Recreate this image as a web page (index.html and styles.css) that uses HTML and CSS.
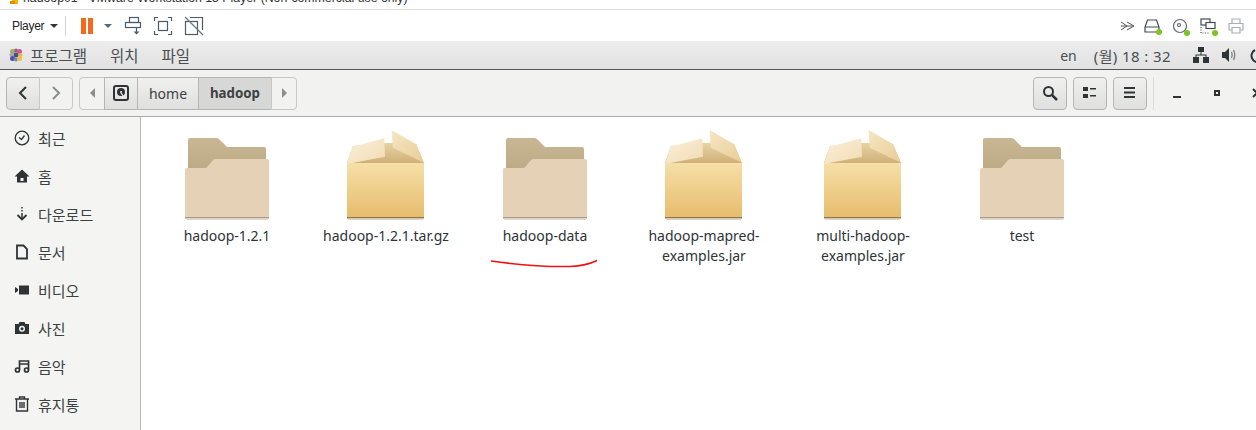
FILE: index.html
```html
<!DOCTYPE html>
<html lang="en">
<head>
    <meta charset="UTF-8">
    <title>hadoop01 - VMware Workstation 15 Player</title>
    <link rel="stylesheet" href="styles.css">
</head>
<body>
    <svg width="0" height="0" class="defs">
        <defs>
            <linearGradient id="boxfront" x1="0" y1="0" x2="0" y2="1"><stop offset="0" stop-color="#f6dfa8"/><stop offset="1" stop-color="#e7bc6c"/></linearGradient>
            <linearGradient id="flapleft" x1="0" y1="0" x2="1" y2="1"><stop offset="0" stop-color="#fbf0da"/><stop offset="1" stop-color="#f1dcb3"/></linearGradient>
            <linearGradient id="flapright" x1="0" y1="0" x2="1" y2="1"><stop offset="0" stop-color="#f6e6c4"/><stop offset="1" stop-color="#e9cd95"/></linearGradient>
            <linearGradient id="boxin" x1="0" y1="0" x2="0" y2="1"><stop offset="0" stop-color="#e8d3a4"/><stop offset="1" stop-color="#cfb077"/></linearGradient>
            <linearGradient id="folderback" x1="0" y1="0" x2="0" y2="1"><stop offset="0" stop-color="#c9b794"/><stop offset="1" stop-color="#b9a683"/></linearGradient>
            <symbol id="folder" viewBox="0 0 90 90">
                <path d="M6 10q0-2 2-2h26q2 0 3 1l8 8h37q2 0 2 2v30H6z" fill="url(#folderback)"/>
                <path d="M3 40q0-2 2-2h18q2 0 3-2l5-6q1-1 3-1h51q2 0 2 2v55q0 2-2 2H5q-2 0-2-2z" fill="#e4d1b6"/>
                <rect x="3" y="87" width="84" height="1.500" fill="#a99b85"/>
                <rect x="4" y="88.500" width="82" height="1.500" fill="#ddd9d2"/>
            </symbol>
            <symbol id="box" viewBox="0 0 90 90">
                <path d="M12 16L44 13h8L75 14 83 33H6z" fill="url(#boxin)"/>
                <rect x="6" y="33" width="77" height="55" fill="url(#boxfront)"/>
                <path d="M6 34L11.700 16.700 43.300 8.300 44 26.700z" fill="url(#flapleft)"/>
                <path d="M50.700 0L75 14.300 82.500 32.500 51.700 17.700z" fill="url(#flapright)"/>
                <rect x="6" y="87" width="77" height="1.500" fill="#8f7748"/>
                <rect x="7" y="88.500" width="75" height="1.500" fill="#d8d4cc"/>
            </symbol>
        </defs>
    </svg>

    <div class="titlebar">
        <svg class="title-icon" width="8" height="5" viewBox="0 0 8 5"><rect x="2" y="0" width="6" height="4" fill="#f5b400"/><rect x="0" y="1" width="5" height="3" fill="#e88a00"/></svg>
        <span class="title-text">hadoop01 - VMware Workstation 15 Player (Non-commercial use only)</span>
    </div>

    <div class="player-bar">
        <div class="player-left">
            <span class="player-menu">Player</span>
            <span class="caret"></span>
            <span class="vsep"></span>
            <span class="pause"><i></i><i></i></span>
            <span class="caret caret-gray"></span>
            <svg class="shift" width="20" height="20" viewBox="0 0 20 20" fill="none" stroke="#4c5b68" stroke-width="1.2"><rect x="5.5" y="1.5" width="9" height="5"/><rect x="1.5" y="6.5" width="15" height="5"/><path d="M12.5 12v4"/><path d="M9.5 15.5h6l-3 3z" fill="#4c5b68" stroke="none"/></svg>
            <svg width="20" height="20" viewBox="0 0 20 20" fill="none" stroke="#4c5b68" stroke-width="1.2"><path d="M1.5 5V1.500H5M15 1.500h3.500V5M18.500 15v3.500H15M5 18.500H1.500V15"/><rect x="5.500" y="5.500" width="9" height="9"/></svg>
            <svg width="20" height="20" viewBox="0 0 20 20" fill="none" stroke="#4c5b68" stroke-width="1.200"><rect x="1.500" y="5.500" width="12" height="13"/><path d="M6 1.500h12.500V14"/><path d="M1 1l18 18" stroke="#6b7680"/></svg>
        </div>
        <div class="player-right">
            <span class="device chevrons"><svg width="15" height="12" viewBox="0 0 15 12" fill="none" stroke="#555" stroke-width="1"><path d="M1 2l6 4-6 4M7 2l7 4-7 4M1 6h12"/></svg></span>
            <span class="device"><svg width="16" height="14" viewBox="0 0 16 14" fill="none" stroke="#3f4c57" stroke-width="1.200"><path d="M3.500 1h9l2.500 7v5H1V8zM1 8h14"/></svg><b></b></span>
            <span class="device"><svg width="16" height="16" viewBox="0 0 16 16" fill="none" stroke="#5b6670" stroke-width="1.200"><circle cx="8" cy="8" r="6.500"/><circle cx="7" cy="7" r="1.500"/></svg><b></b></span>
            <span class="device"><svg width="16" height="16" viewBox="0 0 16 16" fill="none" stroke="#3f4c57" stroke-width="1.200"><rect x="1" y="1" width="9" height="6"/><rect x="6" y="4.500" width="9" height="6" fill="#fff"/><path d="M1 9v6h9" stroke-dasharray="1 1.500"/></svg><b></b></span>
            <span class="device"><svg width="16" height="16" viewBox="0 0 16 16" fill="none" stroke="#a9afb4" stroke-width="1.200"><path d="M4 5V1h8v4M4 12H1V5.500h14V12h-3M4 9.500h8V15H4z"/></svg></span>
        </div>
    </div>

    <div class="gnome-bar">
        <div class="gnome-left">
            <svg class="logo" width="14" height="14" viewBox="0 0 14 14"><circle cx="3.500" cy="3.500" r="2.500" fill="#8fb85a"/><circle cx="7" cy="2.500" r="2" fill="#b0568f"/><circle cx="10.500" cy="3.500" r="2.500" fill="#c75c8e"/><circle cx="2.500" cy="7" r="2" fill="#b79ac0"/><circle cx="7" cy="7" r="2.500" fill="#4c4f8c"/><circle cx="11.500" cy="7" r="2" fill="#e6b84a"/><circle cx="3.500" cy="10.500" r="2.500" fill="#4a5aa0"/><circle cx="7" cy="11.500" r="2" fill="#7c86b8"/><circle cx="10.500" cy="10.500" r="2.500" fill="#e8c04a"/></svg>
            <span class="gnome-menu">프로그램</span>
            <span class="gnome-menu">위치</span>
            <span class="gnome-menu">파일</span>
        </div>
        <div class="gnome-right">
            <span class="lang">en</span>
            <span class="clock">(월) 18 : 32</span>
            <svg width="16" height="16" viewBox="0 0 16 16" fill="#2e3436"><rect x="5" y="0" width="6" height="5"/><rect x="0" y="10" width="6" height="6"/><rect x="10" y="10" width="6" height="6"/><path d="M7.500 5h1v2.500H13.500V10h-1V8.500h-9V10h-1V7.500h5z"/></svg>
            <svg width="16" height="16" viewBox="0 0 16 16" fill="none"><path d="M1 5h3l4-4v14l-4-4H1z" fill="#2e3436"/><path d="M10.500 5q1.500 3 0 6M12.500 3q2.500 5 0 10" stroke="#7a7f82" stroke-width="1.300"/></svg>
            <svg class="power" width="16" height="16" viewBox="0 0 16 16" fill="none" stroke="#2e3436" stroke-width="2"><path d="M5 3a6.500 6.500 0 1 0 6 0M8 0v7"/></svg>
        </div>
    </div>

    <div class="toolbar">
        <div class="btn-group">
            <button class="tool-btn nav-btn"><svg width="12" height="16" viewBox="0 0 12 16" fill="none" stroke="#2e3436" stroke-width="2"><path d="M9 2L3 8l6 6"/></svg></button>
            <button class="tool-btn nav-btn flat"><svg width="12" height="16" viewBox="0 0 12 16" fill="none" stroke="#8b8e8f" stroke-width="2"><path d="M3 2l6 6-6 6"/></svg></button>
        </div>
        <div class="btn-group path">
            <button class="tool-btn arrow-btn flat"><span class="tri tri-left"></span></button>
            <button class="tool-btn disk-btn"><svg width="16" height="16" viewBox="0 0 16 16"><rect x="1" y="1" width="14" height="14" rx="2" fill="none" stroke="#2e3436" stroke-width="2"/><circle cx="8" cy="7" r="4" fill="#2e3436"/><circle cx="8" cy="7" r="1" fill="#eee"/><path d="M8 8l3 4" stroke="#eee" stroke-width="1.200"/></svg></button>
            <button class="tool-btn crumb">home</button>
            <button class="tool-btn crumb active">hadoop</button>
            <button class="tool-btn arrow-btn flat"><span class="tri tri-right"></span></button>
        </div>
        <div class="toolbar-right">
            <button class="tool-btn square"><svg width="16" height="16" viewBox="0 0 16 16" fill="none" stroke="#2e3436" stroke-width="2"><circle cx="6.500" cy="6.500" r="4.500"/><path d="M10 10l5 5" stroke-width="2.500"/></svg></button>
            <button class="tool-btn square"><svg width="14" height="12" viewBox="0 0 14 12" fill="#2e3436"><rect x="0" y="0" width="5" height="4"/><rect x="0" y="7" width="5" height="4"/><rect x="7" y="1" width="6" height="1.500"/><rect x="7" y="8" width="6" height="1.500"/></svg></button>
            <button class="tool-btn square"><svg width="12" height="12" viewBox="0 0 12 12" fill="#2e3436"><rect y="0" width="11" height="2"/><rect y="4.500" width="11" height="2"/><rect y="9" width="11" height="2"/></svg></button>
            <span class="tool-sep"></span>
            <span class="win-btn"><i class="win-min"></i></span>
            <span class="win-btn"><i class="win-max"></i></span>
            <span class="win-btn"><svg width="10" height="10" viewBox="0 0 10 10" stroke="#2e3436" stroke-width="2"><path d="M1 1l8 8M9 1l-8 8"/></svg></span>
        </div>
    </div>

    <div class="main">
        <nav class="sidebar">
            <div class="side-item"><svg width="16" height="16" viewBox="0 0 16 16" fill="none" stroke="#2e3436" stroke-width="1.300"><circle cx="8" cy="8" r="6.800"/><path d="M5 7.500l2.500 2 3-4"/></svg>최근</div>
            <div class="side-item"><svg width="16" height="16" viewBox="0 0 16 16" fill="#2e3436"><path fill-rule="evenodd" d="M8 1.500L0.500 8.500h2.500V14.500h10V8.500h2.500zM6.500 10h3v3h-3z"/></svg>홈</div>
            <div class="side-item"><svg width="16" height="16" viewBox="0 0 16 16" fill="none" stroke="#2e3436" stroke-width="1.500"><path d="M8 1v1.500M8 4v1.500M8 7v5"/><path d="M3.500 9L8 13.500 12.500 9" stroke-width="1.800"/></svg>다운로드</div>
            <div class="side-item"><svg width="16" height="16" viewBox="0 0 16 16" fill="none" stroke="#2e3436" stroke-width="1.800"><path d="M3 1.500h6.500L13 5v9.500H3z"/></svg>문서</div>
            <div class="side-item"><svg width="16" height="16" viewBox="0 0 16 16" fill="#2e3436"><rect x="5" y="3.500" width="10" height="9"/><path d="M1 5l3 2v2l-3 2z"/></svg>비디오</div>
            <div class="side-item"><svg width="16" height="16" viewBox="0 0 16 16"><path d="M1 4h3.500l1-2h5l1 2H15v10H1z" fill="#2e3436"/><circle cx="8" cy="8.800" r="3" fill="#f4f4f3"/><circle cx="8" cy="8.800" r="1.500" fill="#2e3436"/></svg>사진</div>
            <div class="side-item"><svg width="16" height="16" viewBox="0 0 16 16" fill="none" stroke="#2e3436" stroke-width="1.700"><path d="M5.500 11.500V3h9v8.500M5.500 6h9"/><circle cx="3.500" cy="12" r="2"/><circle cx="12.500" cy="12" r="2"/></svg>음악</div>
            <div class="side-item"><svg width="16" height="16" viewBox="0 0 16 16" fill="none" stroke="#2e3436" stroke-width="1.400"><path d="M1 3h14M5.500 3V1h5v2M2.500 3v12h11V3M6 6v6M8 6v6M10 6v6"/></svg>휴지통</div>
        </nav>
        <section class="files">
            <div class="file"><svg class="file-icon" viewBox="0 0 90 90"><use href="#folder"/></svg><span>hadoop-1.2.1</span></div>
            <div class="file"><svg class="file-icon" viewBox="0 0 90 90"><use href="#box"/></svg><span>hadoop-1.2.1.tar.gz</span></div>
            <div class="file"><svg class="file-icon" viewBox="0 0 90 90"><use href="#folder"/></svg><span>hadoop-data</span></div>
            <div class="file"><svg class="file-icon" viewBox="0 0 90 90"><use href="#box"/></svg><span>hadoop-mapred-<br>examples.jar</span></div>
            <div class="file"><svg class="file-icon" viewBox="0 0 90 90"><use href="#box"/></svg><span>multi-hadoop-<br>examples.jar</span></div>
            <div class="file"><svg class="file-icon" viewBox="0 0 90 90"><use href="#folder"/></svg><span>test</span></div>
            <svg class="scribble" width="110" height="12" viewBox="0 0 110 12" fill="none"><path d="M1 3C30 7 60 9 80 8.500C92 8 100 6 107 2.500" stroke="#f01010" stroke-width="1.500"/></svg>
        </section>
    </div>
</body>
</html>
```
FILE: styles.css
```css
* {
    box-sizing: border-box;
}
body {
    margin: 0;
    width: 1256px;
    height: 430px;
    overflow: hidden;
    background: #fff;
    font-family: "Noto Sans", "Noto Sans CJK KR", sans-serif;
    color: #2e3436;
    display: flex;
    flex-direction: column;
}
/* holds gradients and symbols, display:none would break the gradients */
.defs {
    position: absolute;
}
.titlebar {
    height: 10px;
    flex: none;
    display: flex;
    align-items: flex-end;
    gap: 5px;
    padding: 0 0 3px 10px;
    overflow: hidden;
    border-bottom: 1px solid #dedede;
    background: #fff;
}
.title-text {
    font-family: "Liberation Sans", sans-serif;
    font-size: 12.3px;
    line-height: 15px;
    color: #333;
    white-space: nowrap;
    flex: none;
}
.title-icon {
    flex: none;
    align-self: flex-start;
}
.player-bar {
    height: 31px;
    flex: none;
    display: flex;
    justify-content: space-between;
    align-items: center;
    padding: 0 12px 0 12px;
    background: #fff;
}
.player-left, .player-right {
    display: flex;
    align-items: center;
}
.player-left svg {
    margin-left: 11px;
}
.player-left .shift {
    margin-left: 12px;
    margin-right: -2px;
}
.player-right {
    gap: 12px;
}
.player-menu {
    font-family: "Liberation Sans", sans-serif;
    font-size: 12px;
    letter-spacing: -0.300px;
    color: #222;
}
.caret {
    width: 0;
    height: 0;
    margin-left: 6px;
    border-left: 4px solid transparent;
    border-right: 4px solid transparent;
    border-top: 4px solid #333;
}
.caret-gray {
    margin-left: 11px;
    border-top-color: #5a6a78;
}
.vsep {
    width: 1px;
    height: 20px;
    margin: 0 15px 0 7px;
    background: #d5d5d5;
}
.pause {
    display: flex;
    gap: 2px;
}
.pause i {
    width: 5px;
    height: 16px;
    background: #f26a1b;
}
.device {
    position: relative;
    display: flex;
    justify-content: center;
    width: 16px;
}
.chevrons {
    margin-right: -3px;
}
.device b {
    position: absolute;
    right: -2px;
    bottom: -2px;
    width: 6px;
    height: 6px;
    border-radius: 50%;
    background: #7cc41f;
}
.gnome-bar {
    height: 29px;
    flex: none;
    display: flex;
    justify-content: space-between;
    align-items: center;
    padding: 0 0 0 9px;
    background: linear-gradient(#ececec, #e2e2e2);
    border-bottom: 1px solid #555;
    font-size: 15px;
    color: #4a4f50;
}
.gnome-left, .gnome-right {
    display: flex;
    align-items: center;
}
.gnome-left {
    gap: 23px;
}
.gnome-menu {
    font-size: 15.500px;
}
.logo {
    margin-right: -16px;
}
.lang {
    font-size: 14px;
}
.gnome-right svg {
    margin-left: 12px;
}
.gnome-right .power {
    margin-left: 13px;
    margin-right: -10px;
}
.clock {
    margin-left: 17px;
    margin-right: 10px;
    font-size: 15px;
    letter-spacing: 0.400px;
}
.toolbar {
    height: 47px;
    flex: none;
    display: flex;
    align-items: center;
    padding: 0 0 0 6px;
    background: #f2f2f1;
    border-bottom: 1px solid #a9a9a7;
}
.btn-group {
    display: flex;
    height: 33px;
}
.path {
    margin-left: 6px;
}
.tool-btn {
    height: 33px;
    padding: 0;
    display: flex;
    align-items: center;
    justify-content: center;
    font-family: inherit;
    font-size: 14px;
    color: #3c4243;
    background: linear-gradient(#f0f0ef, #dfdfde);
    border: 1px solid #b5b5b3;
    margin-left: -1px;
}
.btn-group .tool-btn:first-child {
    margin-left: 0;
    border-radius: 4px 0 0 4px;
}
.btn-group .tool-btn:last-child {
    border-radius: 0 4px 4px 0;
}
.nav-btn {
    width: 34px;
}
.flat {
    background: #f2f2f1;
    border-color: #c8c8c6;
}
.arrow-btn {
    width: 26px;
}
.disk-btn {
    width: 34px;
}
.crumb {
    width: 62px;
}
.crumb.active {
    width: 74px;
    font-size: 13.300px;
    font-weight: 700;
    background: #d7d7d5;
}
.tri {
    width: 0;
    height: 0;
    border-top: 5px solid transparent;
    border-bottom: 5px solid transparent;
}
.tri-left {
    border-right: 5px solid #8b8e8f;
}
.tri-right {
    border-left: 5px solid #8b8e8f;
}
.toolbar-right {
    margin-left: auto;
    margin-right: -21px;
    display: flex;
    align-items: center;
    gap: 6px;
}
.square {
    width: 34px;
    margin-left: 0;
    border-radius: 4px;
}
.tool-sep {
    width: 1px;
    height: 33px;
    background: #dcdcda;
}
.win-btn {
    width: 40px;
    margin-left: -6px;
    display: flex;
    justify-content: center;
}
.tool-sep + .win-btn {
    margin-left: -3px;
}
.win-min {
    width: 8px;
    height: 2px;
    margin-top: 8px;
    background: #2e3436;
}
.win-max {
    width: 6px;
    height: 6px;
    border: 2px solid #2e3436;
}
.main {
    flex: 1;
    display: flex;
    min-height: 0;
}
.sidebar {
    width: 141px;
    flex: none;
    padding-top: 2px;
    background: #f4f4f3;
    border-right: 1px solid #b8b8b6;
}
.side-item {
    height: 38px;
    display: flex;
    align-items: center;
    gap: 8px;
    padding-left: 14px;
    font-size: 15px;
    color: #3c4243;
}
.files {
    flex: 1;
    position: relative;
    display: flex;
    align-items: flex-start;
    padding: 13px 0 0 6px;
    background: #fff;
}
.file {
    width: 159px;
    display: flex;
    flex-direction: column;
    align-items: center;
    flex: none;
    font-size: 14px;
    line-height: 20px;
    text-align: center;
    color: #2e3436;
}
.file span {
    padding-left: 1px;
}
.file-icon {
    width: 90px;
    height: 90px;
    margin-bottom: 6px;
}
.scribble {
    position: absolute;
    left: 349px;
    top: 141px;
}
```
